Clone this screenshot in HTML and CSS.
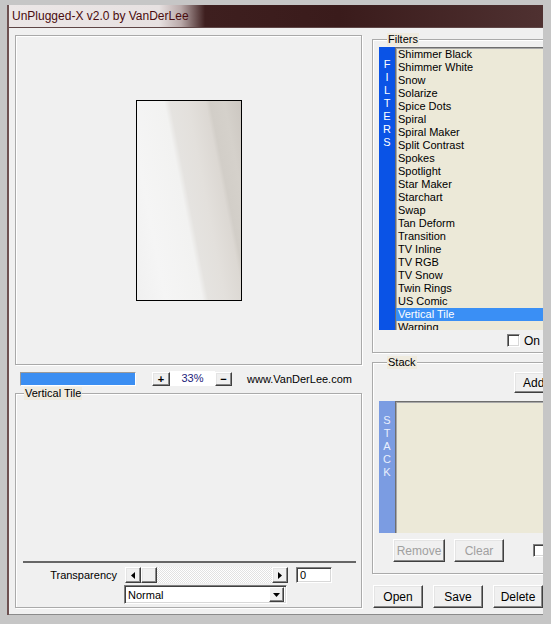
FILE: index.html
```html
<!DOCTYPE html>
<html>
<head>
<meta charset="utf-8">
<title>UnPlugged-X</title>
<link rel="stylesheet" href="styles.css">
</head>
<body>
<div class="window">
  <div class="titlebar"><span class="title">UnPlugged-X v2.0 by VanDerLee</span></div>
  <div class="client">
    <div class="left">
      <div class="preview-panel"><div class="preview-img"></div></div>
      <div class="toolbar">
        <div class="progress"></div>
        <button class="btn small plus">+</button>
        <div class="zoom-label">33%</div>
        <button class="btn small minus">−</button>
        <span class="url">www.VanDerLee.com</span>
      </div>
      <div class="group vt-group">
        <div class="group-label">Vertical Tile</div>
        <div class="spacer"></div>
        <div class="separator"></div>
        <div class="trans-row">
          <span class="trans-label">Transparency</span>
          <div class="hscroll">
            <div class="sb-btn"><svg width="4" height="7" viewBox="0 0 4 7"><path d="M4 0V7L0 3.5Z" fill="#000"/></svg></div>
            <div class="sb-thumb"></div>
            <div class="sb-track"></div>
            <div class="sb-btn"><svg width="4" height="7" viewBox="0 0 4 7"><path d="M0 0V7L4 3.5Z" fill="#000"/></svg></div>
          </div>
          <div class="edit">0</div>
        </div>
        <div class="combo-row">
          <div class="combo"><span class="combo-text">Normal</span><div class="combo-btn"><svg width="7" height="4" viewBox="0 0 7 4"><path d="M0 0H7L3.5 4Z" fill="#000"/></svg></div></div>
        </div>
      </div>
    </div>
    <div class="right">
      <div class="group filters-group">
        <div class="group-label">Filters</div>
        <div class="list-wrap filters-wrap">
          <div class="band filters-band"><span>F</span><span>I</span><span>L</span><span>T</span><span>E</span><span>R</span><span>S</span></div>
          <div class="listbox">
            <div class="item">Shimmer Black</div>
            <div class="item">Shimmer White</div>
            <div class="item">Snow</div>
            <div class="item">Solarize</div>
            <div class="item">Spice Dots</div>
            <div class="item">Spiral</div>
            <div class="item">Spiral Maker</div>
            <div class="item">Split Contrast</div>
            <div class="item">Spokes</div>
            <div class="item">Spotlight</div>
            <div class="item">Star Maker</div>
            <div class="item">Starchart</div>
            <div class="item">Swap</div>
            <div class="item">Tan Deform</div>
            <div class="item">Transition</div>
            <div class="item">TV Inline</div>
            <div class="item">TV RGB</div>
            <div class="item">TV Snow</div>
            <div class="item">Twin Rings</div>
            <div class="item">US Comic</div>
            <div class="item sel">Vertical Tile</div>
            <div class="item">Warping</div>
          </div>
        </div>
        <div class="check-row"><span class="checkbox on-top-box"></span><span class="check-text">On top</span></div>
      </div>
      <div class="group stack-group">
        <div class="group-label">Stack</div>
        <div class="add-row"><button class="btn add">Add</button></div>
        <div class="list-wrap stack-wrap">
          <div class="band stack-band"><span>S</span><span>T</span><span>A</span><span>C</span><span>K</span></div>
          <div class="listbox"></div>
        </div>
        <div class="stack-btns">
          <button class="btn disabled remove">Remove</button>
          <button class="btn disabled clear">Clear</button>
          <span class="checkbox stack-box"></span>
        </div>
      </div>
      <div class="main-btns">
        <button class="btn main open">Open</button>
        <button class="btn main">Save</button>
        <button class="btn main">Delete</button>
      </div>
    </div>
  </div>
</div>
</body>
</html>
```
FILE: styles.css
```css
* { box-sizing: border-box; }
html, body { margin: 0; padding: 0; }
body {
  width: 551px;
  height: 624px;
  overflow: hidden;
  background: #c6c6c6;
  font-family: "Liberation Sans", Arial, sans-serif;
  font-size: 11px;
  color: #000;
}
.window {
  margin: 5px 0 0 7px;
  width: 536px;
  border-left: 2px solid #6d5151;
}
.titlebar {
  height: 22px;
  display: flex;
  align-items: center;
  padding-left: 3px;
  background: linear-gradient(to right, #ece7e7 0, #e7e1e1 150px, #b9a9a9 172px, #3e1f1f 196px, #3a1b1b 330px, #4f3131 100%);
}
.title {
  font-size: 12px;
  color: #4a0c0e;
}
.client {
  height: 588px;
  background: #f0f0f0;
  border-top: 1px solid #5f4646;
  border-bottom: 1px solid #8a8a8a;
  display: flex;
  gap: 10px;
  padding: 7px 0 0 6px;
  overflow: hidden;
}
.left {
  width: 347px;
  flex-shrink: 0;
  display: flex;
  flex-direction: column;
}
.preview-panel {
  height: 330px;
  border: 1px solid #a9a9a9;
  box-shadow: inset 1px 1px 0 #fff, 1px 1px 0 #fff;
  display: flex;
  align-items: center;
  justify-content: center;
}
.preview-img {
  width: 106px;
  height: 201px;
  border: 1px solid #000;
  background: linear-gradient(79deg, #f0f0f0 0%, #f5f5f5 20%, #f2f2f1 46%, #e5e3e0 50%, #e3e0dc 62%, #dcd8d3 75%, #d2cec8 78%, #d5d1cb 88%, #ccc7c1 100%);
}
.toolbar {
  margin-top: 6px;
  height: 15px;
  display: flex;
  align-items: center;
}
.progress {
  margin-left: 5px;
  width: 116px;
  height: 14px;
  border: 1px solid;
  border-color: #9a9a9a #fff #fff #9a9a9a;
  background: #3b8ef2;
}
.btn {
  font-family: "Liberation Sans", Arial, sans-serif;
  font-size: 11px;
  color: #000;
  background: #f0f0f0;
  border: 1px solid;
  border-color: #fff #404040 #404040 #fff;
  box-shadow: inset -1px -1px 0 #888, inset 1px 1px 0 #e4e4e4;
  padding: 0;
  margin: 0;
  display: flex;
  align-items: center;
  justify-content: center;
}
.btn.small {
  height: 14px;
  font-weight: bold;
  font-size: 11px;
}
.plus { margin-left: 16px; width: 18px; }
.minus { width: 17px; }
.zoom-label {
  width: 45px;
  height: 15px;
  background: #fff;
  color: #1c1c7a;
  text-align: center;
  line-height: 15px;
}
.url { margin-left: 15px; }
.group {
  border: 1px solid #aaa;
  box-shadow: inset 1px 1px 0 #fff, 1px 1px 0 #fff;
  display: flex;
  flex-direction: column;
}
.group-label {
  align-self: flex-start;
  margin: -7px 0 0 8px;
  padding: 0 1px;
  height: 13px;
  line-height: 13px;
  background: #efebdf;
}
.vt-group {
  margin-top: 7px;
  height: 215px;
  padding-bottom: 3px;
}
.spacer { flex: 1; }
.separator {
  height: 2px;
  margin: 0 5px 4px 7px;
  background: #666;
}
.trans-row {
  height: 16px;
  display: flex;
  align-items: center;
}
.trans-label {
  width: 101px;
  text-align: right;
}
.hscroll {
  margin-left: 8px;
  width: 163px;
  height: 16px;
  display: flex;
}
.sb-btn, .sb-thumb {
  width: 16px;
  height: 16px;
  background: #f0f0f0;
  border: 1px solid;
  border-color: #fff #404040 #404040 #fff;
  box-shadow: inset -1px -1px 0 #888, inset 1px 1px 0 #e4e4e4;
  display: flex;
  align-items: center;
  justify-content: center;
}
.sb-track {
  flex: 1;
  background-image: repeating-conic-gradient(#fff 0% 25%, #e2e2e2 0% 50%);
  background-size: 2px 2px;
}
.edit {
  margin-left: 8px;
  width: 36px;
  height: 16px;
  background: #fff;
  border: 1px solid;
  border-color: #808080 #fff #fff #808080;
  box-shadow: inset 1px 1px 0 #404040, inset -1px -1px 0 #d8d8d8;
  padding-left: 3px;
  line-height: 14px;
}
.combo-row {
  margin-top: 2px;
  padding-left: 108px;
  height: 19px;
}
.combo {
  width: 163px;
  height: 19px;
  background: #fff;
  border: 1px solid;
  border-color: #808080 #fff #fff #808080;
  box-shadow: inset 1px 1px 0 #404040, inset -1px -1px 0 #d8d8d8;
  display: flex;
  align-items: center;
  padding: 2px;
}
.combo-text { flex: 1; padding-left: 1px; }
.combo-btn {
  width: 15px;
  height: 15px;
  background: #f0f0f0;
  border: 1px solid;
  border-color: #fff #404040 #404040 #fff;
  box-shadow: inset -1px -1px 0 #888;
  display: flex;
  align-items: center;
  justify-content: center;
}
.right {
  width: 180px;
  flex-shrink: 0;
  display: flex;
  flex-direction: column;
}
.filters-group {
  margin-top: 4px;
  height: 314px;
  padding-left: 6px;
}
.list-wrap { display: flex; }
.filters-wrap { margin-top: 1px; height: 283px; }
.band {
  width: 16px;
  display: flex;
  flex-direction: column;
  align-items: center;
  color: #fff;
}
.band span { height: 13px; line-height: 13px; }
.filters-band { background: #0a53e6; padding-top: 11px; }
.stack-band { background: #7b9ce2; padding-top: 13px; color: #e9effd; }
.listbox {
  flex: 1;
  background: #ece9d8;
  border-top: 1px solid #6e6e6e;
  border-left: 1px solid #6e6e6e;
  box-shadow: inset 1px 1px 0 #a8a8a8;
  overflow: hidden;
}
.item {
  height: 13px;
  line-height: 13px;
  padding-left: 2px;
  white-space: nowrap;
}
.item.sel { background: #3a8ff5; color: #fff; }
.check-row {
  margin-top: 4px;
  height: 13px;
  display: flex;
  align-items: center;
  white-space: nowrap;
}
.checkbox {
  width: 13px;
  height: 13px;
  flex-shrink: 0;
  background: #fff;
  border: 1px solid;
  border-color: #808080 #fff #fff #808080;
  box-shadow: inset 1px 1px 0 #404040, inset -1px -1px 0 #d8d8d8;
}
.on-top-box { margin-left: 128px; }
.check-text { margin-left: 4px; font-size: 12px; }
.stack-group {
  margin-top: 9px;
  height: 212px;
  padding-left: 6px;
}
.add-row { margin-top: 3px; height: 21px; display: flex; }
.btn.add { margin-left: 135px; width: 50px; height: 21px; flex-shrink: 0; justify-content: flex-start; padding-left: 8px; font-size: 12px; }
.stack-wrap { margin-top: 8px; height: 132px; }
.stack-btns {
  margin-top: 6px;
  height: 23px;
  display: flex;
  align-items: center;
}
.btn.disabled { color: #a0a0a0; height: 23px; font-size: 12px; }
.remove { margin-left: 14px; width: 52px; }
.clear { margin-left: 9px; width: 50px; }
.stack-box { margin-left: 29px; }
.main-btns {
  margin-top: 11px;
  display: flex;
  gap: 10px;
  padding-left: 1px;
}
.btn.main { width: 50px; height: 23px; font-size: 12px; }
```
